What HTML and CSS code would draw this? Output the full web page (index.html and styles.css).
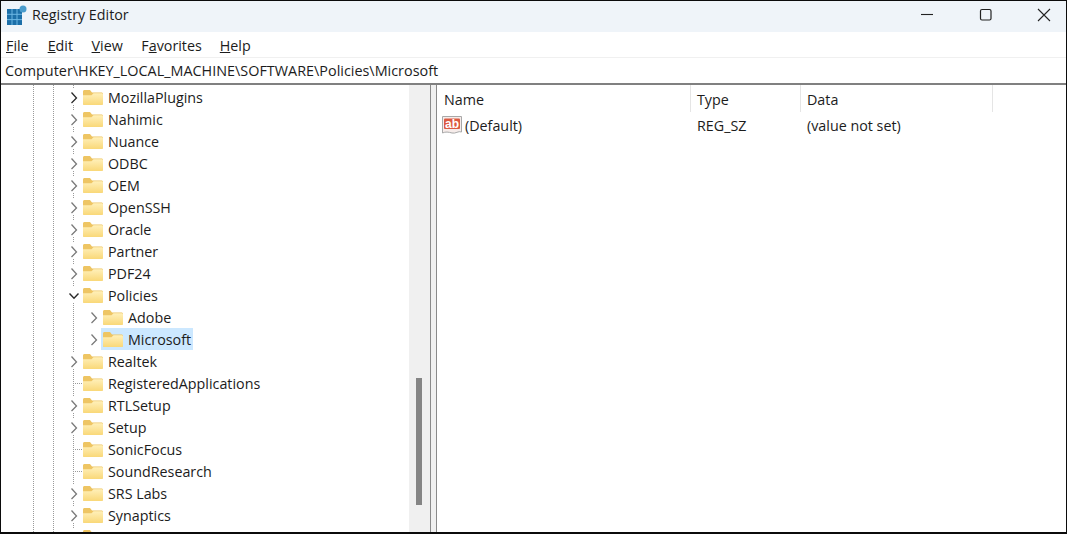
FILE: index.html
```html
<!DOCTYPE html>
<html lang="en">
<head>
<meta charset="utf-8">
<title>Registry Editor</title>
<link rel="stylesheet" href="styles.css">
</head>
<body>
<svg class="defs" width="0" height="0" aria-hidden="true">
  <defs>
    <linearGradient id="fold" x1="0" y1="0" x2="0" y2="1">
      <stop offset="0" stop-color="#fff0ba"/>
      <stop offset="1" stop-color="#f9d878"/>
    </linearGradient>
    <symbol id="folder" viewBox="0 0 20 15">
      <path d="M0 1.500C0 .7.600 0 1.500 0H7l2 2.500h9.500c.8 0 1.500.7 1.500 1.500v9.500c0 .8-.7 1.500-1.500 1.500h-17C.6 15 0 14.300 0 13.500z" fill="#eec563"/>
      <path d="M0 5.200h8.500l2-2h8.200c.7 0 1.300.6 1.300 1.300v9c0 .8-.7 1.500-1.500 1.500h-17C.6 15 0 14.300 0 13.500z" fill="url(#fold)"/>
    </symbol>
    <symbol id="right" viewBox="0 0 14 16"><path d="M4.500 3.500 9.500 9l-5 5" fill="none" stroke="currentColor" stroke-width="1.300"/></symbol>
    <symbol id="down" viewBox="0 0 14 16"><path d="M2.500 6.500 7 11.200l4.500-4.700" fill="none" stroke="currentColor" stroke-width="1.400"/></symbol>
  </defs>
</svg>
<div class="window">
  <header class="titlebar">
    <svg class="appicon" viewBox="0 0 20 20" width="20" height="20" aria-hidden="true">
      <rect x="0" y="4" width="15" height="16" fill="#1c6fa8"/>
      <path d="M5 4v16M10 4v16M0 9.300h15M0 14.600h15" stroke="#6db8e4" stroke-width="1"/>
      <circle cx="16" cy="4" r="3.500" fill="#4a9ccc"/>
    </svg>
    <span class="title">Registry Editor</span>
    <div class="controls">
      <svg viewBox="0 0 14 14" width="14" height="14" aria-hidden="true"><path d="M1 6.500h12" stroke="#222" stroke-width="1.100"/></svg>
      <svg viewBox="0 0 14 14" width="14" height="14" aria-hidden="true"><rect x="1.500" y="1.500" width="10.500" height="10.500" rx="1.500" fill="none" stroke="#222" stroke-width="1.200"/></svg>
      <svg viewBox="0 0 14 14" width="14" height="14" aria-hidden="true"><path d="M1 1l12 12M13 1 1 13" stroke="#222" stroke-width="1.100"/></svg>
    </div>
  </header>
  <nav class="menubar">
    <span><u>F</u>ile</span>
    <span><u>E</u>dit</span>
    <span><u>V</u>iew</span>
    <span>F<u>a</u>vorites</span>
    <span><u>H</u>elp</span>
  </nav>
  <div class="address">Computer\HKEY_LOCAL_MACHINE\SOFTWARE\Policies\Microsoft</div>
  <main class="panes">
    <section class="tree">
      <div class="rows">
        <div class="row"><svg class="chev dark"><use href="#right"/></svg><svg class="fld"><use href="#folder"/></svg><span class="label">MozillaPlugins</span></div>
        <div class="row"><svg class="chev"><use href="#right"/></svg><svg class="fld"><use href="#folder"/></svg><span class="label">Nahimic</span></div>
        <div class="row"><svg class="chev"><use href="#right"/></svg><svg class="fld"><use href="#folder"/></svg><span class="label">Nuance</span></div>
        <div class="row"><svg class="chev"><use href="#right"/></svg><svg class="fld"><use href="#folder"/></svg><span class="label">ODBC</span></div>
        <div class="row"><svg class="chev"><use href="#right"/></svg><svg class="fld"><use href="#folder"/></svg><span class="label">OEM</span></div>
        <div class="row"><svg class="chev"><use href="#right"/></svg><svg class="fld"><use href="#folder"/></svg><span class="label">OpenSSH</span></div>
        <div class="row"><svg class="chev"><use href="#right"/></svg><svg class="fld"><use href="#folder"/></svg><span class="label">Oracle</span></div>
        <div class="row"><svg class="chev"><use href="#right"/></svg><svg class="fld"><use href="#folder"/></svg><span class="label">Partner</span></div>
        <div class="row"><svg class="chev"><use href="#right"/></svg><svg class="fld"><use href="#folder"/></svg><span class="label">PDF24</span></div>
        <div class="row"><svg class="chev dark"><use href="#down"/></svg><svg class="fld"><use href="#folder"/></svg><span class="label">Policies</span></div>
        <div class="row child"><svg class="chev"><use href="#right"/></svg><svg class="fld"><use href="#folder"/></svg><span class="label">Adobe</span></div>
        <div class="row child"><svg class="chev"><use href="#right"/></svg><span class="pick"><svg class="fld"><use href="#folder"/></svg><span class="label">Microsoft</span></span></div>
        <div class="row"><svg class="chev"><use href="#right"/></svg><svg class="fld"><use href="#folder"/></svg><span class="label">Realtek</span></div>
        <div class="row leaf"><span class="stub"></span><svg class="fld"><use href="#folder"/></svg><span class="label">RegisteredApplications</span></div>
        <div class="row"><svg class="chev"><use href="#right"/></svg><svg class="fld"><use href="#folder"/></svg><span class="label">RTLSetup</span></div>
        <div class="row"><svg class="chev"><use href="#right"/></svg><svg class="fld"><use href="#folder"/></svg><span class="label">Setup</span></div>
        <div class="row leaf"><span class="stub"></span><svg class="fld"><use href="#folder"/></svg><span class="label">SonicFocus</span></div>
        <div class="row leaf"><span class="stub"></span><svg class="fld"><use href="#folder"/></svg><span class="label">SoundResearch</span></div>
        <div class="row"><svg class="chev"><use href="#right"/></svg><svg class="fld"><use href="#folder"/></svg><span class="label">SRS Labs</span></div>
        <div class="row"><svg class="chev"><use href="#right"/></svg><svg class="fld"><use href="#folder"/></svg><span class="label">Synaptics</span></div>
        <div class="row"><svg class="chev"><use href="#right"/></svg><svg class="fld"><use href="#folder"/></svg><span class="label">Synchronization Files</span></div>
      </div>
      <div class="scrollbar"><div class="thumb"></div></div>
    </section>
    <div class="splitter"></div>
    <section class="values">
      <div class="columns">
        <div class="col name">Name</div>
        <div class="col type">Type</div>
        <div class="col data">Data</div>
      </div>
      <div class="entry">
        <div class="cell name">
          <svg class="abicon" viewBox="0 0 20 19" width="20" height="19" aria-hidden="true">
            <path d="M.5.500h19v15.500c-3-1.500-6 2-9.500 1S3.500 15.500.5 17z" fill="#f6ecea" stroke="#a8a8a8"/>
            <rect x="2" y="2.500" width="16" height="10.500" rx="1" fill="#dc5a42"/>
            <text x="10" y="11.600" class="abtext">ab</text>
          </svg>
          <span>(Default)</span>
        </div>
        <div class="cell type">REG_SZ</div>
        <div class="cell data">(value not set)</div>
      </div>
    </section>
  </main>
</div>
</body>
</html>
```

FILE: styles.css
```css
* { box-sizing: border-box; }
html, body { margin: 0; height: 100%; background: #fff; }
body { overflow: hidden; font-family: "Open Sans", "Noto Sans", sans-serif; font-size: 14.3px; color: #1c1c1c; }
.defs { display: block; height: 0; }
.window { display: flex; flex-direction: column; width: 1067px; height: 534px; border: solid #0b0b0b; border-width: 1px 1px 2px 1px; }

.titlebar { display: flex; align-items: center; height: 31px; flex: none; background: #eff4f9; padding: 0 0 4px 6px; }
.appicon { flex: none; }
.title { margin-left: 5px; }
.controls { display: flex; align-items: center; gap: 44.500px; margin-left: auto; padding-right: 15px; }
.controls svg { display: block; }

.menubar { display: flex; align-items: center; gap: 18px; height: 26px; flex: none; padding: 2px 0 0 5px; background: #fff; border-bottom: 1px solid #f0f0f0; }
.menubar span:first-child { margin-right: 1px; }
.menubar span:nth-child(2), .menubar span:nth-child(3) { margin-right: .5px; }

.address { display: flex; align-items: center; height: 27px; flex: none; padding-left: 4px; font-size: 14.400px; border-bottom: 2px solid #808080; background: #fff; }

.panes { display: flex; flex: 1; min-height: 0; }
.tree { display: flex; width: 429px; flex: none; overflow: hidden; }
.rows {
  flex: 1; padding-top: 1px; overflow: hidden;
  background-image:
    repeating-linear-gradient(#9a9a9a 0 1px, transparent 1px 2px),
    repeating-linear-gradient(#9a9a9a 0 1px, transparent 1px 2px),
    repeating-linear-gradient(#9a9a9a 0 1px, transparent 1px 2px);
  background-size: 1px 100%, 1px 100%, 1px 100%;
  background-position: 32px 0, 52px 0, 72px 0;
  background-repeat: no-repeat;
}
.row { display: flex; align-items: center; height: 22px; padding-left: 66px; white-space: nowrap; }
.row.child { padding-left: 86px; }
.chev { display: block; width: 14px; height: 16px; flex: none; margin-right: 2px; background: #fff; color: #7a7a7a; }
.chev.dark { color: #2a2a2a; }
.stub {
  display: block; width: 10px; height: 1px; flex: none; margin: 0 0 0 6px;
  background: repeating-linear-gradient(90deg, #9a9a9a 0 1px, transparent 1px 2px);
}
.fld { display: block; width: 20px; height: 15px; flex: none; }
.label { margin-left: 5px; }
.pick { display: flex; align-items: center; height: 22px; margin-left: -2px; padding: 0 2px; background: #cce8ff; }

.scrollbar { width: 21px; flex: none; background: #f0f0f0; padding: 293px 0 0 7px; }
.thumb { width: 6px; height: 127px; background: #858585; }
.splitter { width: 7px; flex: none; background: #f0f0f0; border-left: 1px solid #8a8a8a; border-right: 1px solid #8a8a8a; }

.values { flex: 1; min-width: 0; }
.columns { display: flex; height: 27px; }
.col { display: flex; align-items: center; padding: 2px 0 0 7px; border-right: 1px solid #e5e5e5; }
.col.type, .col.data { padding-left: 6px; }
.name { width: 254px; flex: none; }
.type { width: 110px; flex: none; }
.data { width: 192px; flex: none; }
.entry { display: flex; align-items: center; height: 24px; padding-top: 2px; }
.cell { padding-left: 6px; }
.cell.name { display: flex; align-items: center; gap: 3px; padding-left: 5px; }
.abicon { flex: none; }
.abtext { font-family: "Liberation Sans", sans-serif; font-size: 12px; font-weight: 700; fill: #fff; text-anchor: middle; }
```
